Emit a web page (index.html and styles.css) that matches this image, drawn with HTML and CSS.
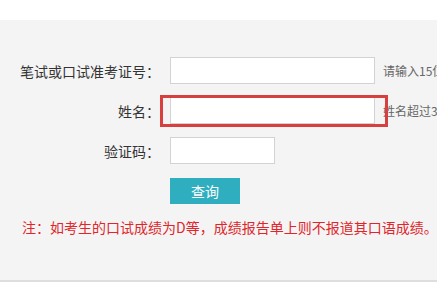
FILE: index.html
```html
<!DOCTYPE html>
<html lang="zh-CN">
<head>
    <meta charset="UTF-8">
    <title>成绩查询</title>
    <link rel="stylesheet" href="styles.css">
</head>
<body>
    <div class="top"></div>

    <div class="main">
        <form class="query-form">
            <div class="form-row">
                <label class="form-label">笔试或口试准考证号：</label>
                <input class="form-input" type="text">
                <span class="form-hint">请输入15位准考证号</span>
            </div>
            <div class="form-row">
                <label class="form-label">姓名：</label>
                <input class="form-input" type="text">
                <span class="form-hint">姓名超过3个字的，只需输入前3个字</span>
                <!-- 标注框 -->
                <div class="mark-box"></div>
            </div>
            <div class="form-row">
                <label class="form-label">验证码：</label>
                <input class="form-input form-input-short" type="text">
            </div>
            <div class="form-row">
                <span class="form-label"></span>
                <button class="btn-query" type="button">查询</button>
            </div>
        </form>

        <p class="note">注：如考生的口试成绩为D等，成绩报告单上则不报道其口语成绩。</p>
    </div>
</body>
</html>
```

FILE: styles.css
```css
html, body {
    overflow: hidden;
}

body {
    margin: 0;
    padding: 0;
    background: #fff;
    font-family: "Microsoft YaHei", "Noto Sans CJK SC", sans-serif;
    color: #333;
}

.top {
    height: 20px;
    background: #fff;
}

.main {
    height: 262px;
    background: #f4f4f4;
    border-bottom: 2px solid #dedede;
    box-sizing: border-box;
    padding-top: 37px;
    white-space: nowrap;
}

.query-form {
    margin: 0;
}

.form-row {
    position: relative;
    display: flex;
    align-items: center;
    height: 27px;
    margin-bottom: 13px;
}

.form-label {
    flex: none;
    width: 160px;
    margin-right: 10px;
    text-align: right;
    font-size: 14px;
    color: #333;
}

.form-input {
    flex: none;
    width: 205px;
    height: 27px;
    box-sizing: border-box;
    margin: 0;
    padding: 0 6px;
    border: 1px solid #d3d3d3;
    background: #fff;
    outline: none;
}

.form-input-short {
    width: 105px;
}

.form-hint {
    flex: none;
    margin-left: 8px;
    font-size: 12px;
    color: #666;
}

.btn-query {
    flex: none;
    width: 70px;
    height: 26px;
    margin: 0;
    padding: 0;
    border: none;
    background: #2eaebf;
    color: #fff;
    font-family: inherit;
    font-size: 14px;
}

.mark-box {
    position: absolute;
    left: 160px;
    top: -2px;
    width: 228px;
    height: 32px;
    box-sizing: border-box;
    border: 3px solid #d8403f;
    pointer-events: none;
}

.note {
    margin: 12px 0 0;
    padding-left: 22px;
    font-size: 14px;
    color: #e0252b;
}
```
